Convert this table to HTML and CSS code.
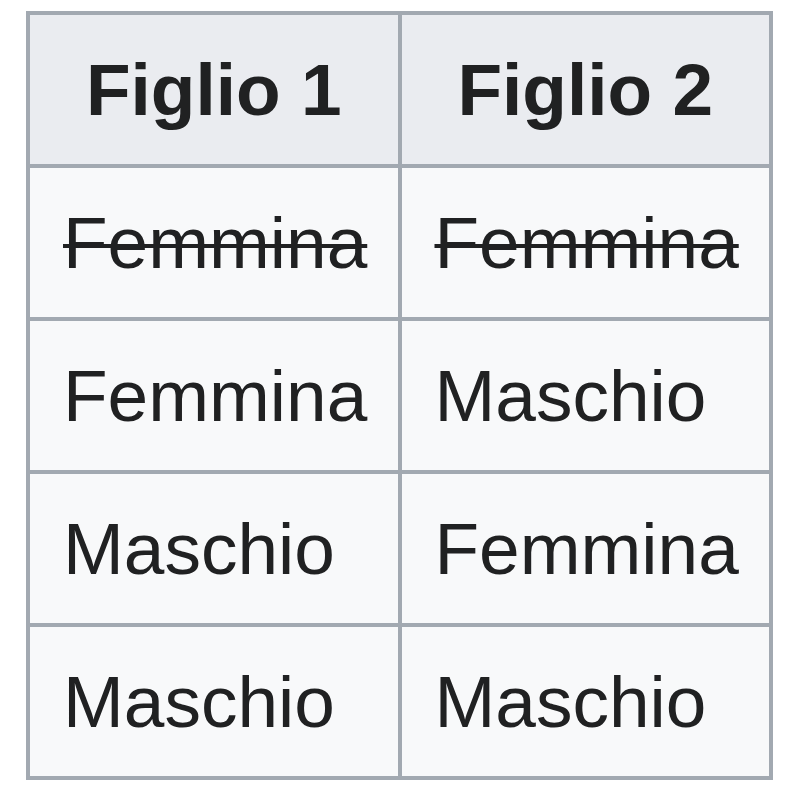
FILE: index.html
```html
<!DOCTYPE html>
<html lang="it">
<head>
<meta charset="utf-8">
<title>Figli</title>
<link rel="stylesheet" href="styles.css">
</head>
<body>
<table class="wikitable">
  <thead>
    <tr><th>Figlio 1</th><th>Figlio 2</th></tr>
  </thead>
  <tbody>
    <tr><td><s>Femmina</s></td><td><s>Femmina</s></td></tr>
    <tr><td>Femmina</td><td>Maschio</td></tr>
    <tr><td>Maschio</td><td>Femmina</td></tr>
    <tr><td>Maschio</td><td>Maschio</td></tr>
  </tbody>
</table>
</body>
</html>
```
FILE: styles.css
```css
html, body {
  margin: 0;
  padding: 0;
  background: #ffffff;
}
body {
  padding: 11px 0 0 26px;
  font-family: "Liberation Sans", Arial, sans-serif;
  color: #202122;
}
.wikitable {
  border-collapse: collapse;
  table-layout: fixed;
  width: 747px;
  background: #f8f9fa;
  border: 4px solid #a2a9b1;
}
.wikitable th,
.wikitable td {
  border: 4px solid #a2a9b1;
  width: 50%;
  height: 149px;
  padding: 0 0 0 33px;
  font-size: 73px;
  line-height: 1;
  text-align: left;
  vertical-align: middle;
  white-space: nowrap;
}
.wikitable th {
  background: #eaecf0;
  font-weight: bold;
  text-align: center;
  padding: 0;
}
.wikitable s {
  text-decoration-thickness: 4px;
}
```
